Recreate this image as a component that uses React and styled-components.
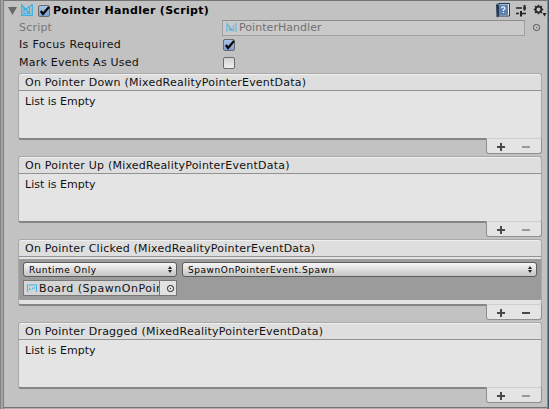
import React from "react";
import styled, { createGlobalStyle } from "styled-components";

const Global = createGlobalStyle`
  * { box-sizing: border-box; }
  body { margin: 0; background: #a2a2a2; overflow: hidden; }
`;

const Window = styled.div`
  display: flex;
  width: 549px;
  height: 409px;
  font: 11px/16px "DejaVu Sans", Verdana, sans-serif;
  color: #111;
  background: #c2c2c2;
  white-space: nowrap;
`;
const Gutter = styled.div`
  width: 4px;
  flex: none;
  border-right: 1px solid #7f7f7f;
  background: linear-gradient(90deg, #828282 1px, #a5a5a5 1px);
`;
const Edge = styled.div`
  width: 2px;
  flex: none;
  border-left: 1px solid #858585;
  background: #40536e;
`;
const Inspector = styled.main`
  flex: 1;
  min-width: 0;
  height: 408px;
  padding-left: 4px;
  border-top: 1px solid #747474;
  border-bottom: 1px solid #747474;
  box-shadow: 0 1px #b0b0b0;
`;
const Header = styled.header`
  display: flex;
  height: 18px;
  align-items: center;
`;
const Title = styled.h1`
  flex: 1;
  margin: 2px 0 0 3px;
  font-size: 11px;
  line-height: 18px;
  font-weight: bold;
  letter-spacing: 0.3px;
  color: #000;
`;
const Tools = styled.div`
  display: flex;
  gap: 5px;
  align-items: center;
`;
const Row = styled.div`
  display: flex;
  height: ${(p) => p.$h || 18}px;
  align-items: center;
  padding-left: 11px;
`;
const Label = styled.span`
  width: ${(p) => p.$w || 204}px;
  letter-spacing: ${(p) => p.$track || 0}px;
  color: ${(p) => (p.$muted ? "#777" : "#111")};
`;
const Box = styled.span`
  display: block;
  width: 12px;
  height: 12px;
  flex: none;
  border: 1px solid #6b6b6b;
  border-radius: 2px;
  background: ${(p) => (p.$on ? "linear-gradient(#a9c2e6, #7da0d2)" : "linear-gradient(#d2d2d2, #f0f0f0)")};
  svg { display: block; margin: -1px 0 0 -1px; overflow: visible; }
`;
const ScriptField = styled.div`
  display: flex;
  align-items: center;
  width: 303px;
  height: 16px;
  padding-left: 3px;
  gap: 2px;
  border: 1px solid #a0a0a0;
  border-top-color: #8d8d8d;
  background: #cacaca;
  color: #707070;
  letter-spacing: 0.05px;
`;
const Picker = styled.svg`
  display: block;
  flex: none;
  margin-left: ${(p) => p.$gap || 0}px;
`;
const Lists = styled.div`
  display: grid;
  grid-auto-rows: 83px;
  width: 524px;
  margin: 1px 0 0 10px;
`;
const List = styled.section`
  display: flex;
  flex-direction: column;
`;
const ListTitle = styled.div`
  height: 18px;
  padding-left: 6px;
  border: 1px solid #a9a9a9;
  border-bottom-color: #929292;
  border-radius: 3px 3px 0 0;
  background: #dedede;
  box-shadow: inset 0 1px #f0f0f0;
  line-height: 17px;
  letter-spacing: 0.225px;
`;
const ListBody = styled.div`
  height: 49px;
  padding: ${(p) => (p.$filled ? "2px 0 4px" : "3px 6px")};
  border: 1px solid #a9a9a9;
  border-top: 0;
  border-bottom: 2px solid #858585;
  border-radius: 0 0 3px 3px;
  background: #e4e4e4;
`;
const Entry = styled.div`
  display: grid;
  grid-template-columns: 154px 355px;
  grid-template-rows: 15px 16px;
  gap: 3px 5px;
  height: 41px;
  padding: 3px 4px;
  background: #9b9b9b;
`;
const Dropdown = styled.div`
  display: flex;
  align-items: center;
  justify-content: space-between;
  height: 15px;
  padding: 0 4px 0 5px;
  border: 1px solid #5d5d5d;
  border-radius: 3px;
  background: linear-gradient(#f6f6f6, #c4c4c4);
  font-size: 9px;
  letter-spacing: 0.55px;
  color: #000;
`;
const ObjectField = styled.div`
  display: flex;
  align-items: center;
  height: 16px;
  padding-left: 3px;
  border: 1px solid #777;
  background: #d5d5d5;
`;
const ObjectName = styled.span`
  width: 120px;
  height: 14px;
  margin-left: 2px;
  overflow: hidden;
  line-height: 15px;
  letter-spacing: 0.5px;
`;
const PickButton = styled.span`
  display: flex;
  align-items: center;
  justify-content: center;
  flex: 1;
  height: 14px;
  padding-left: 5px;
  border-left: 1px solid #777;
  background: #e2e2e2;
`;
const Footer = styled.div`
  display: flex;
  align-items: center;
  justify-content: space-between;
  align-self: flex-end;
  width: 56px;
  height: 16px;
  margin-top: -2px;
  padding: 2px 11px 0 10px;
  border: 1px solid #8f8f8f;
  border-top-color: #cfcfcf;
  border-radius: 0 0 3px 3px;
  background: #e4e4e4;
`;

const Tick = () => (
  <svg width="13" height="13" viewBox="0 0 13 13">
    <path d="M2.8 6 L5 9 L11 2" fill="none" stroke="#050505" strokeWidth="2.2" />
  </svg>
);
const Check = ({ on }) => <Box $on={on}>{on && <Tick />}</Box>;

const ScriptIcon = () => (
  <svg width="12" height="12" viewBox="0 0 12 12">
    <path d="M.7 0V11.3H11.3V0 M.7 1 L8.7 9.5 M8.5 3.5V9.5H3V4 L8.5 9.5 M5 5 L11.3 .7" fill="none" stroke="#31b2e8" strokeWidth="1.2" />
  </svg>
);
const SmallScriptIcon = () => (
  <svg width="11" height="10" viewBox="0 0 11 10">
    <path d="M1 0V9 M10 0V9 M1 1L7 8 M4 8V4 M7.5 8V2" fill="none" stroke="#62b9df" strokeWidth="1.2" />
    <path d="M3 4L7 8H3Z" fill="#62b9df" />
  </svg>
);
const BoardIcon = () => (
  <svg width="10" height="8" viewBox="0 0 10 8">
    <path d="M0 1H10 M.5 1V7.5H1.5 M9.5 1V7.5H8.5" fill="none" stroke="#3eb6e7" />
    <path d="M2.5 3.5V5.5H4 M5.5 3.5V5.5 M7.5 3V5" fill="none" stroke="#58aed0" />
  </svg>
);
const Target = ({ color = "#555", gap }) => (
  <Picker $gap={gap} width="9" height="9" viewBox="0 0 9 9">
    <circle cx="4.5" cy="4.5" r="3.1" fill="none" stroke={color} />
    <rect x="4" y="4" width="1" height="1" fill={color} />
  </Picker>
);
const Arrows = () => (
  <svg width="4" height="7" viewBox="0 0 4 7">
    <path d="M0 3L2 0L4 3Z M0 4H4L2 7Z" fill="#222" />
  </svg>
);
const Fold = styled.svg`
  margin: 2px 3px 0 0;
`;
const CheckSlot = styled.div`
  margin: 1px 0 0 5px;
`;

const teeth = [0, 45, 90, 135];

const HeaderTools = () => (
  <Tools>
    <svg width="14" height="15" viewBox="0 0 14 15">
      <path d="M.5 1.5L3 .5H13.5V13H3L1 14Z" fill="#e8edf2" stroke="#26384f" />
      <path d="M1 2L3.5 1V12.5L1 13.5Z" fill="#253b59" />
      <rect x="3" y="1.5" width="9" height="10.5" fill="#5d82b0" />
      <path d="M5.5 5.2Q5.5 3.8 7.2 3.8Q9 3.8 9 5.3Q9 6.3 7.4 7V8 M7.4 9V10" fill="none" stroke="#eef5fc" strokeWidth="1.2" />
    </svg>
    <svg width="13" height="13" viewBox="0 0 13 13">
      <path d="M1 4H7M8.5 4H11M1 9.5H4M6 9.5H11" stroke="#222" strokeWidth="1.4" />
      <path d="M9.5 1V6.5M6 7V12.5" stroke="#222" strokeWidth="2" />
    </svg>
    <svg width="14" height="13" viewBox="0 0 14 13">
      {teeth.map((a) => (
        <path key={a} d="M5.5 .8V10.2" stroke="#252525" strokeWidth="1.8" transform={`rotate(${a} 5.5 5.5)`} />
      ))}
      <circle cx="5.5" cy="5.5" r="2.8" fill="#c2c2c2" stroke="#252525" strokeWidth="1.6" />
      <path d="M9.5 9H13.5L11.5 12.5Z" fill="#222" />
    </svg>
  </Tools>
);

const ListFooter = ({ active }) => (
  <Footer>
    <svg width="8" height="8" viewBox="0 0 8 8">
      <path d="M0 4H8M4 0V8" stroke="#484848" strokeWidth="2" />
    </svg>
    <svg width="8" height="8" viewBox="0 0 8 8">
      <path d="M0 4H8" stroke={active ? "#484848" : "#999"} strokeWidth="2" />
    </svg>
  </Footer>
);

const EventList = ({ name, children }) => (
  <List>
    <ListTitle>{name} (MixedRealityPointerEventData)</ListTitle>
    <ListBody $filled={!!children}>{children || <Label>List is Empty</Label>}</ListBody>
    <ListFooter active={!!children} />
  </List>
);

export default function App() {
  return (
    <>
      <Global />
      <Window>
        <Gutter />
        <Inspector>
          <Header>
            <Fold width="10" height="8" viewBox="0 0 10 8">
              <path d="M0 0H9L4.5 8Z" fill="#686868" />
            </Fold>
            <ScriptIcon />
            <CheckSlot><Check on /></CheckSlot>
            <Title>Pointer Handler (Script)</Title>
            <HeaderTools />
          </Header>
          <Row $h={17}>
            <Label $muted $w={203} $track={0.2}>Script</Label>
            <ScriptField>
              <SmallScriptIcon />
              PointerHandler
            </ScriptField>
            <Target gap={7} />
          </Row>
          <Row>
            <Label $track={0.34}>Is Focus Required</Label>
            <Check on />
          </Row>
          <Row>
            <Label $track={0.23}>Mark Events As Used</Label>
            <Check />
          </Row>
          <Lists>
            <EventList name="On Pointer Down" />
            <EventList name="On Pointer Up" />
            <EventList name="On Pointer Clicked">
              <Entry>
                <Dropdown>Runtime Only<Arrows /></Dropdown>
                <Dropdown>SpawnOnPointerEvent.Spawn<Arrows /></Dropdown>
                <ObjectField>
                  <BoardIcon />
                  <ObjectName>Board (SpawnOnPointerEvent)</ObjectName>
                  <PickButton><Target color="#222" /></PickButton>
                </ObjectField>
              </Entry>
            </EventList>
            <EventList name="On Pointer Dragged" />
          </Lists>
        </Inspector>
        <Edge />
      </Window>
    </>
  );
}
